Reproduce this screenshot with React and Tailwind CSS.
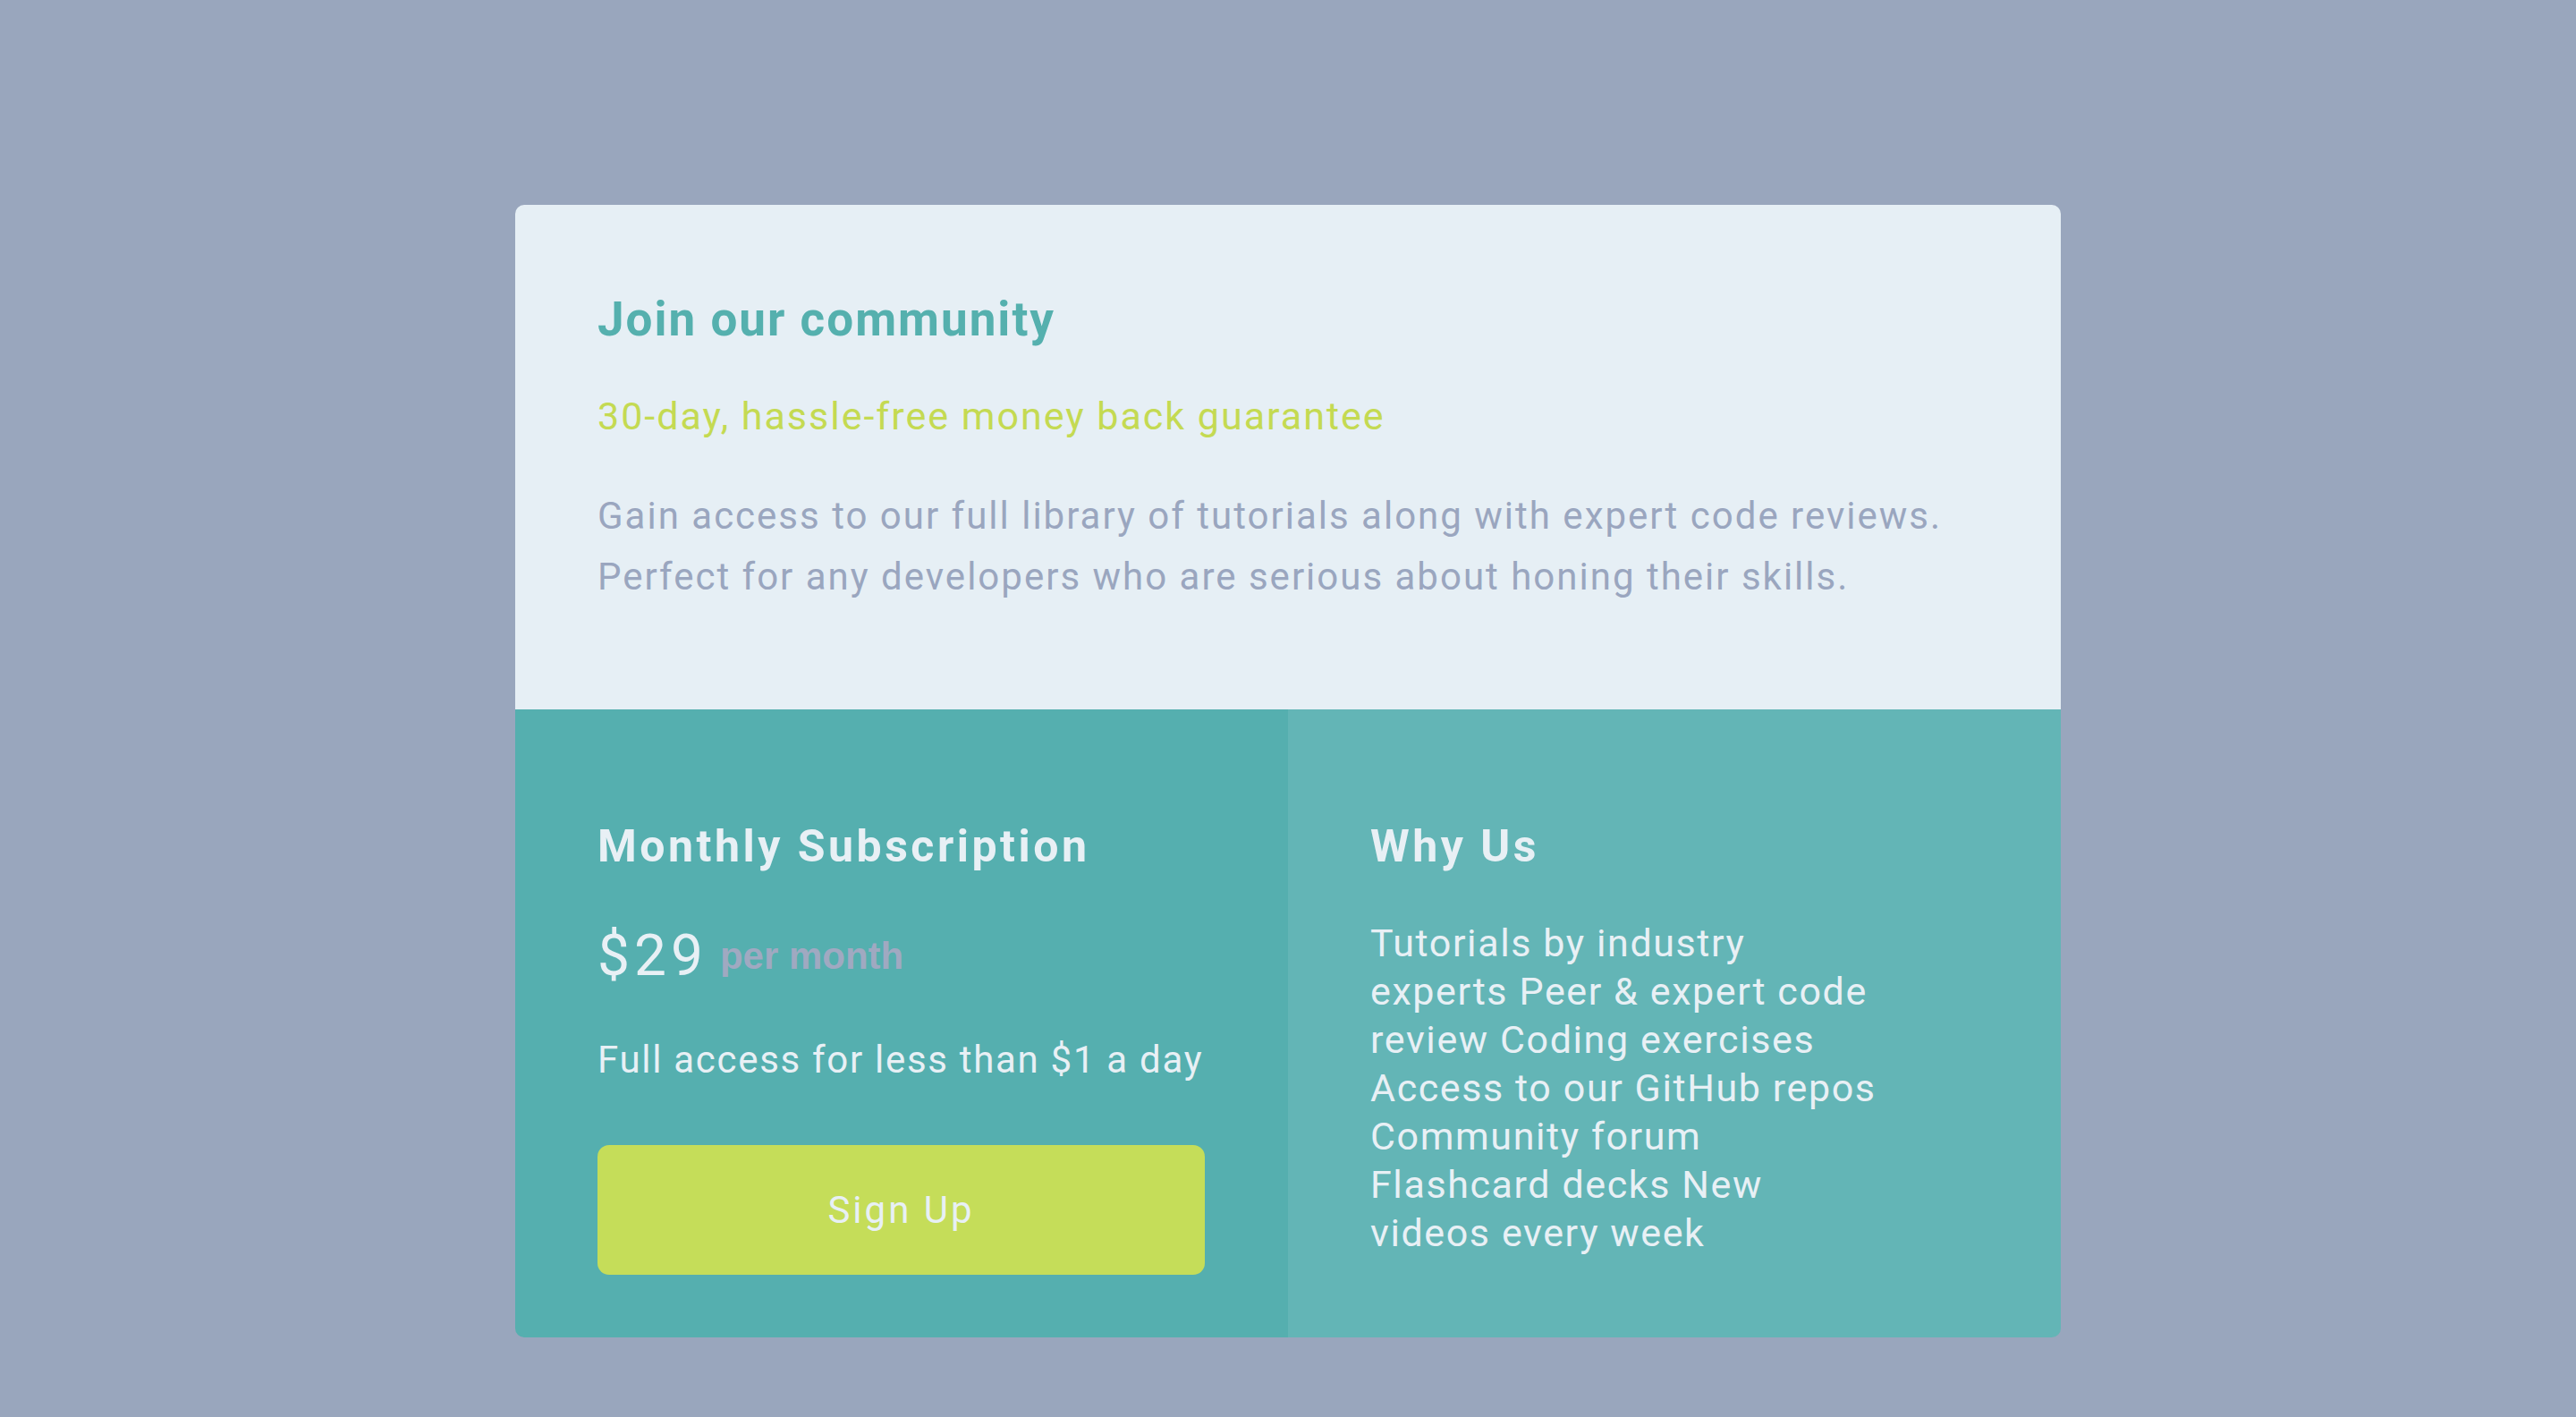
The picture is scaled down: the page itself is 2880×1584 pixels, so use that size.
import React from 'react';

const whyLines = [
  'Tutorials by industry',
  'experts Peer & expert code',
  'review Coding exercises',
  'Access to our GitHub repos',
  'Community forum',
  'Flashcard decks New',
  'videos every week',
];

const App = () => {
  return (
    <div className="min-h-screen w-full bg-[#99a6bd] flex justify-center pt-[229px] [font-family:Roboto,sans-serif]">
      <div className="w-[1728px] h-fit rounded-[10px] overflow-hidden">
        {/* top */}
        <div className="bg-[#e6eff5] px-[92px] pt-[96px] pb-[114px]">
          <h1 className="text-[53px] leading-[64px] font-bold tracking-[2px] text-[#55b0ae]">Join our community</h1>
          <p className="mt-[48px] text-[43px] leading-[56px] tracking-[2px] text-[#c4da52]">
            30-day, hassle-free money back guarantee
          </p>
          <p className="mt-[50px] text-[42px] leading-[68px] tracking-[2px] text-[#9aa6bf]">
            Gain access to our full library of tutorials along with expert code reviews.
            <br />
            Perfect for any developers who are serious about honing their skills.
          </p>
        </div>

        {/* bottom */}
        <div className="grid grid-cols-2 text-[#e8f0f5]">
          <div className="bg-[#55afaf] pl-[92px] pr-[93px] pt-[123px] pb-[70px]">
            <h2 className="text-[50px] leading-[60px] font-bold tracking-[3.5px]">Monthly Subscription</h2>
            <div className="mt-[55px] flex items-center">
              <span className="text-[64px] leading-[76px] tracking-[5px]">$29</span>
              <span className="ml-[14px] text-[42px] leading-[42px] font-bold text-[#a0a9c1] [font-family:'Liberation_Sans',Arial,sans-serif]">
                per month
              </span>
            </div>
            <p className="mt-[50px] text-[42px] leading-[56px] tracking-[1.7px]">Full access for less than $1 a day</p>
            <button className="mt-[67px] w-full h-[145px] rounded-[13px] bg-[#c5dd59] text-[42px] tracking-[3px] text-[#e8f0f5]">
              Sign Up
            </button>
          </div>
          <div className="bg-[#63b5b6] pl-[92px] pr-[93px] pt-[123px] pb-[70px]">
            <h2 className="text-[50px] leading-[60px] font-bold tracking-[3.5px]">Why Us</h2>
            <p className="mt-[51px] text-[43px] leading-[54px] tracking-[1.6px]">
              {whyLines.map((line, i) => (
                <span key={i} className="block whitespace-nowrap">{line}</span>
              ))}
            </p>
          </div>
        </div>
      </div>
    </div>
  );
};

export default App;
